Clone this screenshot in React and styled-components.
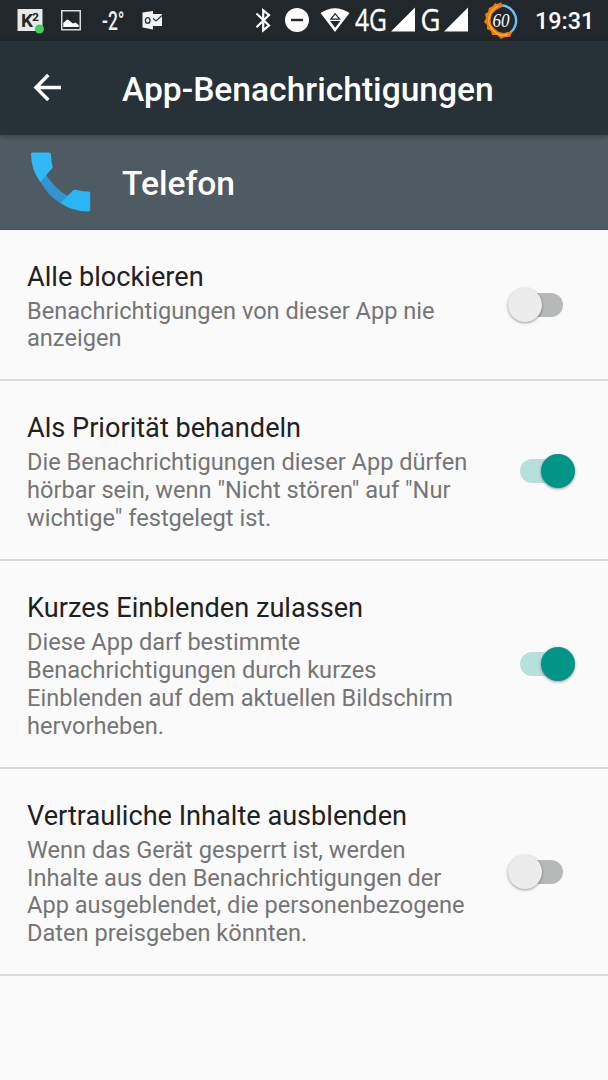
import React from "react";
import styled, { createGlobalStyle } from "styled-components";

const GlobalStyle = createGlobalStyle`
  * { box-sizing: border-box; }
  body { margin: 0; background: #fafafa; font-family: Roboto, "Liberation Sans", sans-serif; }
`;

const Screen = styled.div`
  width: 608px;
  height: 1080px;
  overflow: hidden;
  display: flex;
  flex-direction: column;
  background: #fafafa;
`;

const StatusBar = styled.div`
  height: 41px;
  flex: none;
  display: flex;
  justify-content: space-between;
  padding: 0 15px 0 17px;
  background: #21272b;
  color: #fff;
`;

const StatusGroup = styled.div`
  display: flex;
  align-items: center;
`;

const StatusIcon = styled.svg`
  display: block;
  flex: none;
  height: 41px;
  margin-left: ${(p) => p.$gap || 0}px;
  overflow: visible;
`;

const Clock = styled.span`
  width: 58px;
  margin: 2px 0 0 16px;
  font-size: 23.4px;
  font-weight: 500;
  line-height: 41px;
  white-space: nowrap;
`;

const Toolbar = styled.header`
  position: relative;
  height: 94px;
  flex: none;
  display: flex;
  align-items: center;
  padding-left: 27px;
  background: #263238;
  box-shadow: 0 1px 6px rgba(0, 0, 0, 0.35);
`;

const BackButton = styled.button`
  width: 95px;
  height: 60px;
  padding: 0;
  border: 0;
  background: none;
  text-align: left;
  svg { display: block; }
`;

const Heading = styled.h1`
  margin: ${(p) => p.$drop || 3}px 0 0;
  color: #fff;
  font-size: 33.6px;
  font-weight: 500;
  line-height: 40px;
  white-space: nowrap;
`;

const AppHeader = styled.section`
  height: 94.5px;
  flex: none;
  display: flex;
  align-items: center;
  padding-left: 27px;
  background: #4f5b62;
  border-bottom: 1px solid #445057;
  svg { display: block; flex: none; margin: 1px 27px 0 0; }
`;

const Row = styled.div`
  display: flex;
  align-items: center;
  justify-content: space-between;
  padding: 31px 28px 26.4px 27px;
  border-bottom: 2px solid #dadada;
`;

const Copy = styled.div`
  width: 450px;
`;

const Title = styled.div`
  color: #212121;
  font-size: 27.15px;
  line-height: 32px;
  margin-bottom: 5px;
  white-space: nowrap;
`;

const Summary = styled.div`
  color: #757575;
  font-size: 23.6px;
  line-height: 27.8px;
  white-space: nowrap;
`;

const SwitchSlot = styled.div`
  display: flex;
  flex: none;
  padding-right: ${(p) => (p.$on ? 5 : 17.5)}px;
  margin-bottom: 4px;
`;

const Track = styled.button`
  width: 51px;
  height: 24px;
  padding: 0;
  border: 0;
  display: flex;
  align-items: center;
  justify-content: ${(p) => (p.$on ? "flex-end" : "flex-start")};
  margin-right: ${(p) => (p.$on ? 4 : 0)}px;
  border-radius: 12px;
  background: ${(p) => (p.$on ? "#b7e0db" : "#b7b9b8")};
`;

const Thumb = styled.span`
  width: 34px;
  height: 34px;
  flex: none;
  margin: 0 -4px;
  border-radius: 50%;
  background: ${(p) => (p.$on ? "#009587" : "#ececec")};
  box-shadow: 0 1px 3px rgba(0, 0, 0, 0.4);
`;

const settings = [
  { title: "Alle blockieren", on: false, lines: ["Benachrichtigungen von dieser App nie", "anzeigen"] },
  {
    title: "Als Priorität behandeln",
    on: true,
    lines: ["Die Benachrichtigungen dieser App dürfen", 'hörbar sein, wenn "Nicht stören" auf "Nur', 'wichtige" festgelegt ist.'],
  },
  {
    title: "Kurzes Einblenden zulassen",
    on: true,
    lines: ["Diese App darf bestimmte", "Benachrichtigungen durch kurzes", "Einblenden auf dem aktuellen Bildschirm", "hervorheben."],
  },
  {
    title: "Vertrauliche Inhalte ausblenden",
    on: false,
    lines: ["Wenn das Gerät gesperrt ist, werden", "Inhalte aus den Benachrichtigungen der", "App ausgeblendet, die personenbezogene", "Daten preisgeben könnten."],
  },
];

function Switch({ on }) {
  return (
    <SwitchSlot $on={on}>
      <Track $on={on} role="switch" aria-checked={on}>
        <Thumb $on={on} />
      </Track>
    </SwitchSlot>
  );
}

function Signal({ gap }) {
  return (
    <StatusIcon $gap={gap} width="24" viewBox="0 0 24 41">
      <path d="M24 7.5V31.5H0Z" fill="#fff" />
    </StatusIcon>
  );
}

function NotificationIcons() {
  return (
    <StatusGroup>
      <StatusIcon width="28" viewBox="0 0 28 41">
        <rect x="0.5" y="9" width="25" height="22" fill="#e9e9e9" />
        <text x="4" y="27" fontSize="19" fontWeight="700" fontFamily="Roboto, sans-serif" fill="#22272a" textLength="12" lengthAdjust="spacingAndGlyphs">K</text>
        <text x="15" y="20.5" fontSize="10.5" fontWeight="700" fontFamily="Roboto, sans-serif" fill="#22272a" textLength="7" lengthAdjust="spacingAndGlyphs">2</text>
        <circle cx="22.5" cy="29" r="4.5" fill="#45cf50" />
      </StatusIcon>
      <StatusIcon $gap={16} width="20" viewBox="0 0 20 41">
        <rect x="0.75" y="10.75" width="18.5" height="19" fill="none" stroke="#d9dadb" strokeWidth="1.5" />
        <path d="M2.3 27V23L6 19.5L7.5 20L9 21.2L12 23.5L14.5 22.4L17.7 25V27Z" fill="#fff" />
      </StatusIcon>
      <StatusIcon $gap={21} width="23" viewBox="0 0 23 41">
        <text x="0" y="29.5" fontSize="25" fontWeight="500" fontFamily="Roboto, sans-serif" fill="#eee" textLength="22.5" lengthAdjust="spacingAndGlyphs">-2°</text>
      </StatusIcon>
      <StatusIcon $gap={17} width="21" viewBox="0 0 21 41">
        <path d="M10 14H20V26H10Z" fill="#f2f2f2" />
        <path d="M10.5 18L14 21L20 15.5" fill="none" stroke="#343a3d" strokeWidth="1.2" />
        <path d="M0.5 12.5L11 11V29.5L0.5 27.5Z" fill="#f2f2f2" />
        <ellipse cx="5.7" cy="20.4" rx="2.3" ry="2.8" fill="none" stroke="#303639" strokeWidth="1.4" />
      </StatusIcon>
    </StatusGroup>
  );
}

function SystemIcons() {
  return (
    <StatusGroup>
      <StatusIcon width="16" viewBox="0 0 16 41">
        <path d="M1.5 13.5L14 25.5L8.2 30.3V10.3L14 15L1.5 27.2" fill="none" stroke="#fff" strokeWidth="2.2" />
      </StatusIcon>
      <StatusIcon $gap={14} width="24" viewBox="0 0 24 41">
        <circle cx="12" cy="20" r="12" fill="#fff" />
        <path d="M6 20H18" stroke="#21272b" strokeWidth="2.4" />
      </StatusIcon>
      <StatusIcon $gap={11} width="30" viewBox="0 0 30 41">
        <path d="M0.5 13Q15 3.5 29.5 13L15 32Z" fill="#fff" />
        <path d="M10.8 19.2L15.2 13.7L19.6 19.2Z" fill="none" stroke="#21272b" strokeWidth="1.2" />
        <path d="M10 21H20.4L15.2 27.8Z" fill="#21272b" />
      </StatusIcon>
      <StatusIcon $gap={5} width="32" viewBox="0 0 32 41">
        <text x="0" y="31.3" fontSize="30.5" fontFamily="Open Sans, sans-serif" fill="#fff" stroke="#fff" strokeWidth="0.3" textLength="32" lengthAdjust="spacingAndGlyphs">4G</text>
      </StatusIcon>
      <Signal gap={4} />
      <StatusIcon $gap={6} width="20" viewBox="0 0 20 41">
        <text x="-0.5" y="31.3" fontSize="30.5" fontFamily="Open Sans, sans-serif" fill="#fff" stroke="#fff" strokeWidth="0.3" textLength="20" lengthAdjust="spacingAndGlyphs">G</text>
      </StatusIcon>
      <Signal gap={3} />
      <StatusIcon $gap={15} width="36" viewBox="0 0 36 41">
        <path d="M18 5.2A15.5 15.5 0 0 1 27 33" fill="none" stroke="#64c5f4" strokeWidth="2.4" />
        <path d="M19 2L14 4L12 3L10 6L6 8L5 12L2 14L3 18L1 22L4 25L4 29L8 31L9 35L14 35L18 39L22 37L27 37L29 32L25 32L21 33L16 32L12 29L8.5 25L7.5 20L9 14L13 10L17 8L21 6L18 4Z" fill="#ef7a0c" />
        <path d="M15 6L10 9.5L6.5 15L5.5 22L8 28L13 33L19 35.5L25 34.5" fill="none" stroke="#ffb32c" strokeWidth="1.5" />
        <text x="9.5" y="26.5" fontSize="19" fontStyle="italic" fontFamily="Liberation Serif, serif" fill="#fff" textLength="17" lengthAdjust="spacingAndGlyphs">60</text>
      </StatusIcon>
      <Clock>19:31</Clock>
    </StatusGroup>
  );
}

function PhoneIcon() {
  return (
    <svg width="68" height="68" viewBox="0 0 68 68">
      <path d="M12 31C17.5 42 24 49 33 55L41 48C32 43 24 35 18 25Z" fill="#3295d0" />
      <path d="M5.5 4.5H22Q24 4.5 24 6.5Q24 13 25.8 19.5L13.2 34Q4 21 4 6Q4 4.5 5.5 4.5Z" fill="#31b8f6" />
      <path d="M33 55L46.5 42Q48 41.3 50 42Q55 43.5 61.5 43.5Q63.2 43.5 63.2 45.5V61.5Q63.2 63.5 61 63.5Q46 63.5 33 55Z" fill="#29b6f6" />
    </svg>
  );
}

export default function App() {
  return (
    <>
      <GlobalStyle />
      <Screen>
        <StatusBar>
          <NotificationIcons />
          <SystemIcons />
        </StatusBar>
        <Toolbar>
          <BackButton aria-label="Zurück">
            <svg width="40" height="60" viewBox="0 0 40 60">
              <path d="M21.3 17L9 29.5L21.3 42M9 29.5H34" fill="none" stroke="#fff" strokeWidth="3.4" />
            </svg>
          </BackButton>
          <Heading>App-Benachrichtigungen</Heading>
        </Toolbar>
        <AppHeader>
          <PhoneIcon />
          <Heading as="h2" $drop={5}>Telefon</Heading>
        </AppHeader>
        {settings.map((s) => (
          <Row key={s.title}>
            <Copy>
              <Title>{s.title}</Title>
              {s.lines.map((line) => (
                <Summary key={line}>{line}</Summary>
              ))}
            </Copy>
            <Switch on={s.on} />
          </Row>
        ))}
      </Screen>
    </>
  );
}
